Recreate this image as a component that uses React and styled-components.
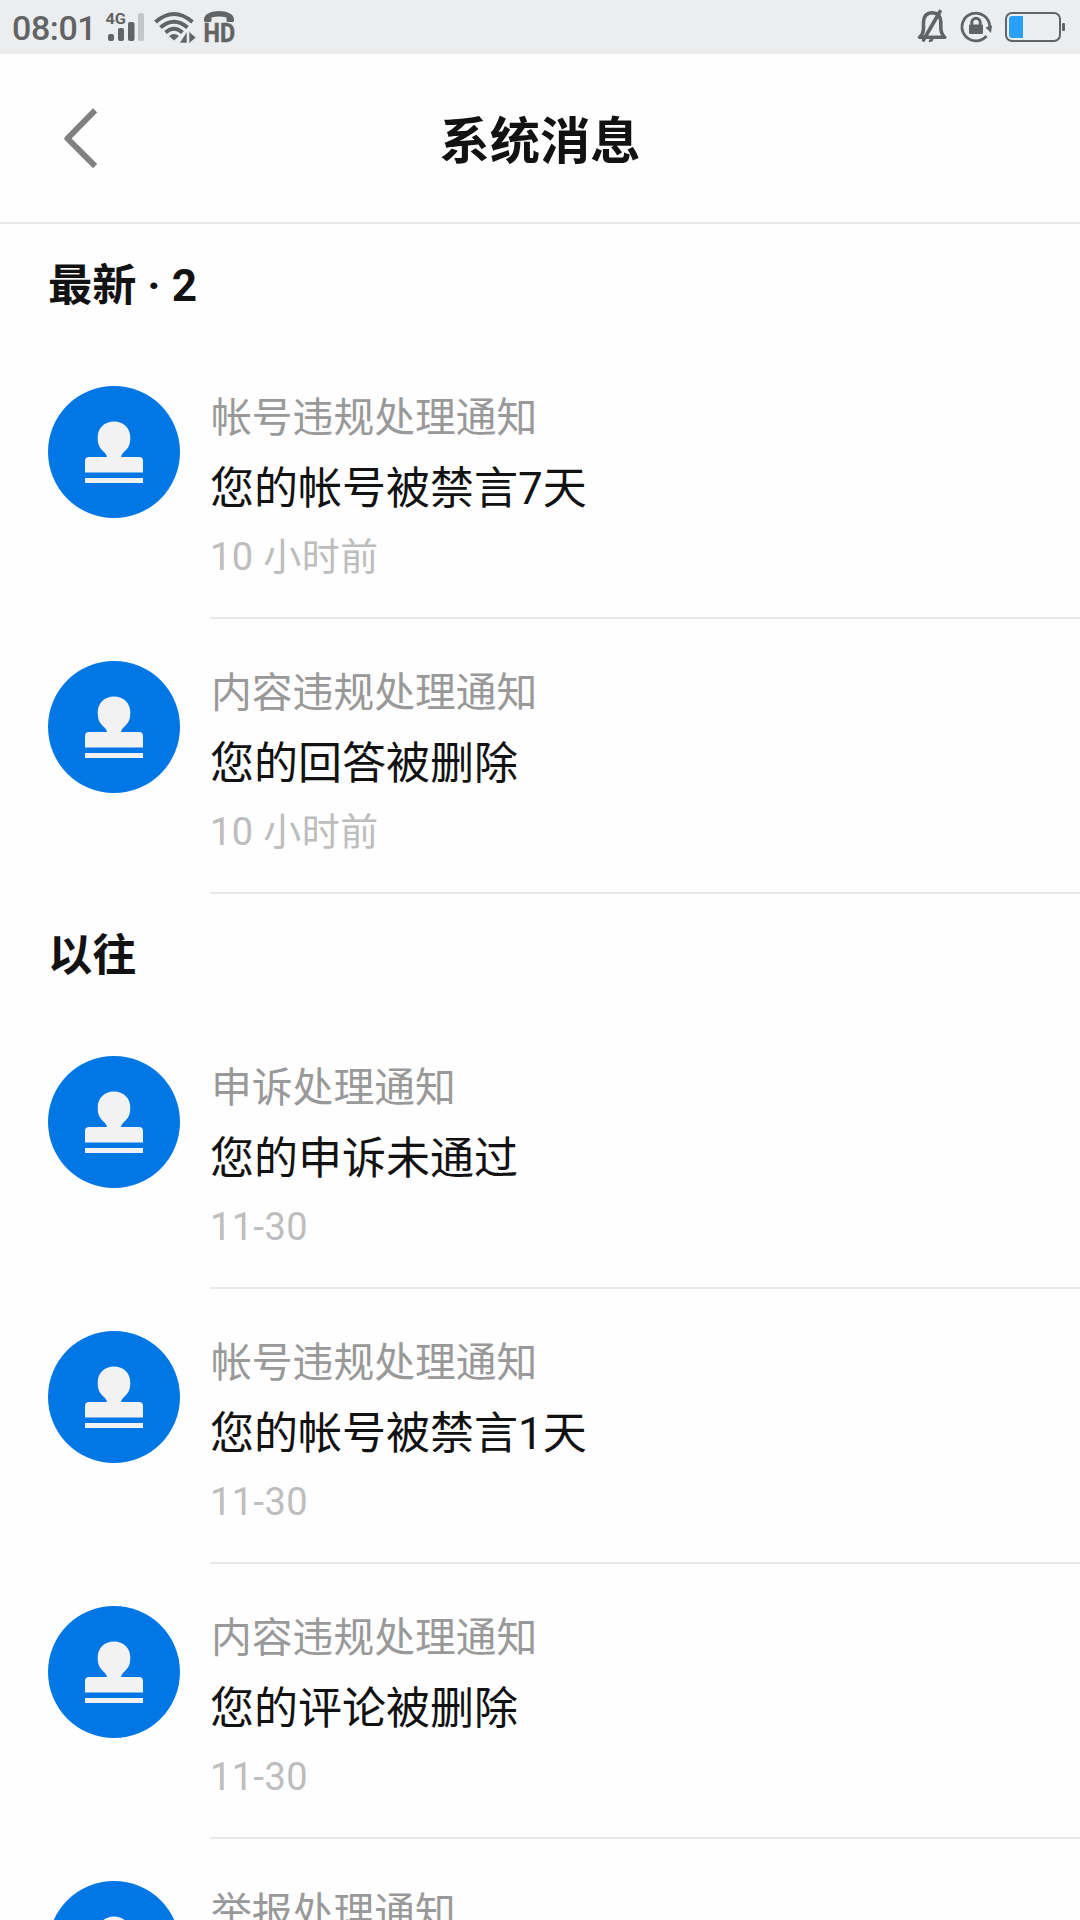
import styled, { createGlobalStyle } from "styled-components";

const GlobalStyle = createGlobalStyle`
	* {
		box-sizing: border-box;
	}
	body {
		margin: 0;
		background-color: #fefefe;
		font-family: Roboto, "Noto Sans CJK SC", sans-serif;
		color: #121212;
	}
`;

const Screen = styled.div`
	width: 1080px;
	height: 1920px;
	overflow: hidden;
`;

const StatusBar = styled.div`
	display: flex;
	align-items: center;
	justify-content: space-between;
	height: 54px;
	padding: 0 15px 0 12px;
	background-color: #ecedef;
	color: #626365;
`;

const StatusGroup = styled.div`
	display: flex;
	align-items: center;
	gap: ${(props) => props.$gap}px;
	svg {
		display: block;
		overflow: visible;
	}
`;

const Clock = styled.span`
	width: 84px;
	font-size: 34px;
	font-weight: 500;
	line-height: 54px;
	letter-spacing: -0.4px;
	white-space: nowrap;
	padding-top: 2px;
`;

const Header = styled.header`
	display: grid;
	grid-template-columns: 160px 1fr 160px;
	align-items: center;
	height: 170px;
	border-bottom: 2px solid #e9e9e9;
`;

const BackButton = styled.button`
	width: 160px;
	height: 168px;
	padding: 0;
	border: none;
	background-color: transparent;
	cursor: pointer;
	svg {
		display: block;
	}
`;

const PageTitle = styled.h1`
	margin: 0;
	padding-top: 8px;
	font-size: 50.3px;
	font-weight: 700;
	line-height: 72px;
	text-align: center;
`;

const SectionTitle = styled.h2`
	margin: 0;
	height: 120px;
	padding: 2px 0 0 48px;
	font-size: 44.2px;
	font-weight: 700;
	line-height: 120px;
`;

const Row = styled.article`
	display: flex;
	gap: 30px;
	height: 275px;
	padding-left: 48px;
`;

const Avatar = styled.div`
	flex: none;
	width: 132px;
	height: 132px;
	margin-top: 42px;
	border-radius: 50%;
	background-color: #0077e4;
	svg {
		display: block;
	}
`;

const RowBody = styled.div`
	flex: 1;
	padding: 39px 0 0 1px;
	border-bottom: 2px solid #e9e9e9;
`;

const Kind = styled.div`
	font-size: 40.8px;
	line-height: 70px;
	color: #999999;
`;

const Message = styled.div`
	margin-left: -1px;
	font-size: 44px;
	line-height: 73px;
`;

const Time = styled.div`
	margin-left: -1px;
	font-size: 38px;
	line-height: 63px;
	letter-spacing: 0.4px;
	color: #bdbdbd;
`;

const sections = [
	{
		title: "最新 · 2",
		items: [
			{ kind: "帐号违规处理通知", message: "您的帐号被禁言7天", time: "10 小时前" },
			{ kind: "内容违规处理通知", message: "您的回答被删除", time: "10 小时前" },
		],
	},
	{
		title: "以往",
		items: [
			{ kind: "申诉处理通知", message: "您的申诉未通过", time: "11-30" },
			{ kind: "帐号违规处理通知", message: "您的帐号被禁言1天", time: "11-30" },
			{ kind: "内容违规处理通知", message: "您的评论被删除", time: "11-30" },
			{ kind: "举报处理通知" },
		],
	},
];

const SignalIcon = () => (
	<svg width="40" height="54" viewBox="105 0 40 54" fill="currentColor">
		<text x="105.5" y="24" fontSize="15" fontWeight="700" textLength="20.5" lengthAdjust="spacingAndGlyphs">
			4G
		</text>
		<rect x="108" y="34" width="6" height="7" rx="2" />
		<rect x="118" y="28" width="6" height="13" rx="2" />
		<rect x="128" y="22" width="6.5" height="19" rx="2" />
		<rect x="138" y="13" width="6" height="28" rx="2" fill="#c5c6c8" />
	</svg>
);

const WifiIcon = () => (
	<svg width="41" height="54" viewBox="154 0 41 54" fill="none" stroke="currentColor" strokeWidth="4">
		<path d="M155.5 22Q174 6 192.5 22" />
		<path d="M160.5 27.5Q174 16 187.5 27.5" />
		<path d="M165.5 32.5Q174 25 182.5 32.5" />
		<path d="M169 36Q174 32 179 36L174 40.5Z" fill="currentColor" stroke="none" />
		<path d="M187 31.5V43H179.5ZM189 31.5L196 37.5L189 43.5Z" fill="currentColor" stroke="#ecedef" strokeWidth="0.6" />
	</svg>
);

const HdIcon = () => (
	<svg width="31" height="54" viewBox="204 0 31 54" fill="currentColor">
		<path d="M204 19.5C204 8 234 8 234 19.5V20.5Q234 22 232.5 22H228Q226.5 22 226.5 20.5V17.5Q219 15.5 211.5 17.5V20.5Q211.5 22 210 22H205.5Q204 22 204 20.5Z" />
		<text
			x="203.5"
			y="42"
			fontSize="25.5"
			fontWeight="700"
			stroke="currentColor"
			strokeWidth="0.5"
			textLength="31.5"
			lengthAdjust="spacingAndGlyphs"
		>
			HD
		</text>
	</svg>
);

const MutedIcon = () => (
	<svg width="30" height="54" viewBox="918 0 30 54" fill="none" stroke="currentColor" strokeWidth="3.6">
		<path d="M920.5 37.3Q924.5 34 924.5 28V22Q925 13 933 12.8Q941.5 13 941.8 22V28Q942 34 945.8 37.3Z" strokeLinejoin="round" />
		<path d="M941 11.5L924.5 40" strokeLinecap="round" />
		<path d="M930 40.5Q933 41.5 933.5 38" strokeWidth="2.5" />
	</svg>
);

const RotationLockIcon = () => (
	<svg width="32" height="54" viewBox="960 0 32 54" fill="none" stroke="currentColor" strokeWidth="2.8">
		<path d="M989.8 27A13.9 13.9 0 1 0 986.5 36" />
		<path d="M985.5 27.5L992 25.5L991 33Z" fill="currentColor" stroke="none" />
		<path d="M971.8 26V22.5A4.2 4.2 0 0 1 980.2 22.5V26" strokeWidth="3" />
		<rect x="969" y="24.5" width="14" height="9.5" rx="1" fill="currentColor" stroke="none" />
	</svg>
);

const BatteryIcon = () => (
	<svg width="60" height="54" viewBox="1005 0 60 54" fill="none">
		<rect x="1006" y="13" width="54" height="28" rx="6" stroke="currentColor" strokeWidth="2" />
		<path d="M1023 16V38H1012Q1009 38 1009 35V19Q1009 16 1012 16Z" fill="#2aa0fb" />
		<rect x="1062" y="23" width="3" height="8" rx="1" fill="currentColor" />
	</svg>
);

const StampIcon = () => (
	<svg width="132" height="132" viewBox="0 0 132 132" fill="#f2f2f3">
		<path d="M66 35.5C75.5 35.5 82.3 42 82.3 51.5C82.3 60.5 79.5 62.5 75 67Q73 69.5 73 71H91Q95 71 95 75V86.5H37V75Q37 71 41 71H59Q59 69.5 57 67C52.5 62.5 49.7 60.5 49.7 51.5C49.7 42 56.5 35.5 66 35.5Z" />
		<rect x="37" y="92" width="58" height="5" />
	</svg>
);

const Notice = ({ kind, message, time }) => {
	return (
		<Row>
			<Avatar>
				<StampIcon />
			</Avatar>
			<RowBody>
				<Kind>{kind}</Kind>
				{message && <Message>{message}</Message>}
				{time && <Time>{time}</Time>}
			</RowBody>
		</Row>
	);
};

export default function App() {
	return (
		<>
			<GlobalStyle />
			<Screen>
				<StatusBar>
					<StatusGroup $gap={9}>
						<Clock>08:01</Clock>
						<SignalIcon />
						<WifiIcon />
						<HdIcon />
					</StatusGroup>
					<StatusGroup $gap={13}>
						<MutedIcon />
						<RotationLockIcon />
						<BatteryIcon />
					</StatusGroup>
				</StatusBar>
				<Header>
					<BackButton type="button" aria-label="返回">
						<svg width="160" height="168" viewBox="0 54 160 168" fill="none" stroke="#808080" strokeWidth="6">
							<path d="M93 112.5L67.5 138.5L93 164" strokeLinecap="square" strokeLinejoin="round" />
						</svg>
					</BackButton>
					<PageTitle>系统消息</PageTitle>
				</Header>
				{sections.map((section) => (
					<section key={section.title}>
						<SectionTitle>{section.title}</SectionTitle>
						{section.items.map((item, index) => (
							<Notice key={index} {...item} />
						))}
					</section>
				))}
			</Screen>
		</>
	);
}
